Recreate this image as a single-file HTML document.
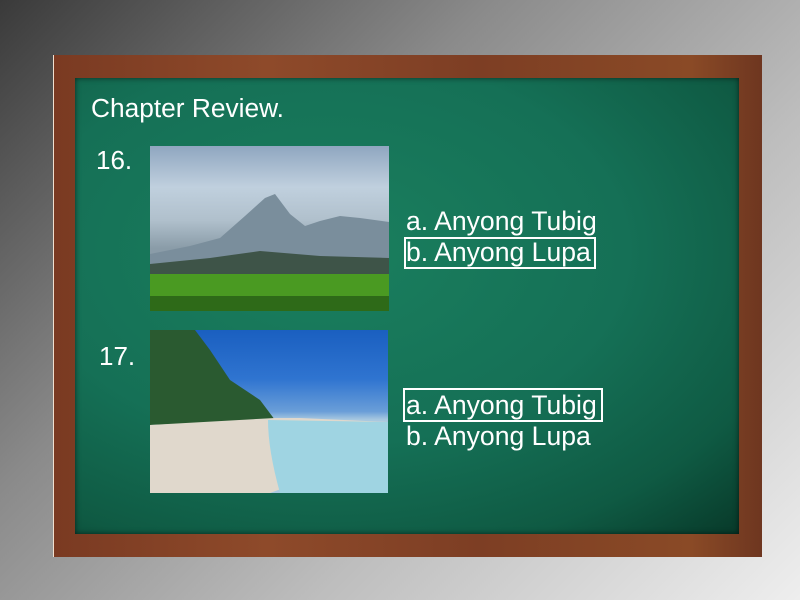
<!DOCTYPE html>
<html><head><meta charset="utf-8"><style>
html,body{margin:0;padding:0}
body{width:800px;height:600px;position:relative;overflow:hidden;
background:linear-gradient(135deg,#3a3a3a 0%,#8a8a8a 35%,#bdbdbd 65%,#eeeeee 100%);
font-family:"Liberation Sans",sans-serif;color:#fff}
.frame{position:absolute;left:53px;top:55px;width:709px;height:502px;
background:linear-gradient(90deg,#7a3a22,#8e4a2a 30%,#7d3e24 60%,#8a4a26 90%,#6e3620);
border-left:1px solid #f0e0d0;box-sizing:border-box}
.board{position:absolute;left:75px;top:78px;width:664px;height:456px;
background:radial-gradient(ellipse 90% 85% at 38% 38%,#1a7f5e 0%,#157056 50%,#0f5a43 80%,#083a2a 100%);
box-shadow:inset 0 0 6px rgba(0,0,0,.6)}
.t{position:absolute;white-space:nowrap;line-height:1}
.ans{font-size:26.6px}
.box{position:absolute;border:2px solid #fff;box-sizing:border-box}
.img1{position:absolute;left:150px;top:146px;width:239px;height:165px;
background:linear-gradient(180deg,#8fa6c0 0%,#c0d0de 25%,#b0c0cc 45%,#8a9ca8 62%)}
.img2{position:absolute;left:150px;top:330px;width:238px;height:163px;
background:linear-gradient(180deg,#1a5fc0 0%,#2f74d0 30%,#6a9ed8 50%,#a8c8e0 55%)}
</style></head><body>
<div class="frame"></div>
<div class="board"></div>
<div class="t" style="left:91px;top:95px;font-size:26.3px">Chapter Review.</div>
<div class="t" style="left:96px;top:147px;font-size:26px">16.</div>
<div class="t" style="left:99px;top:343px;font-size:26px">17.</div>
<div class="img1">
<svg width="239" height="165" style="position:absolute;left:0;top:0">
<path d="M0 108 L40 100 L70 92 L95 70 L115 52 L125 48 L140 68 L155 80 L170 75 L190 70 L210 72 L239 76 L239 128 L0 128Z" fill="#7a8e9c"/>
<path d="M0 118 L60 112 L110 105 L170 110 L239 112 L239 130 L0 130Z" fill="#3e5448"/>
<rect x="0" y="128" width="239" height="37" fill="#4a9a22"/>
<rect x="0" y="150" width="239" height="15" fill="#2e6a18"/>
</svg></div>
<div class="img2">
<svg width="238" height="163" style="position:absolute;left:0;top:0">
<path d="M0 0 L0 95 L125 90 L110 70 L80 50 L60 20 L45 0Z" fill="#2a5a30"/>
<path d="M0 95 L125 88 L150 88 L238 92 L238 120 L120 163 L0 163Z" fill="#e0d8cc"/>
<path d="M118 90 L238 92 L238 163 L130 163 Q118 120 118 90Z" fill="#9fd4e2"/>
</svg></div>
<div class="t ans" style="left:406px;top:208px">a. Anyong Tubig</div>
<div class="t ans" style="left:406px;top:239px">b. Anyong Lupa</div>
<div class="box" style="left:404px;top:237px;width:192px;height:32px"></div>
<div class="t ans" style="left:406px;top:392px">a. Anyong Tubig</div>
<div class="t ans" style="left:406px;top:423px">b. Anyong Lupa</div>
<div class="box" style="left:403px;top:388px;width:200px;height:34px"></div>
</body></html>
